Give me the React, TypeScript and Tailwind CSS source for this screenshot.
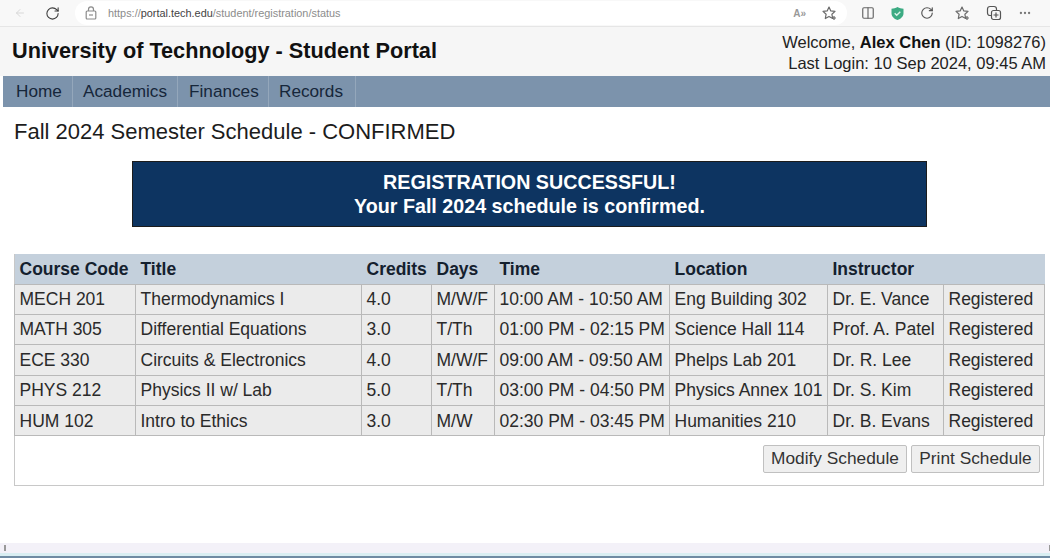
import { ArrowLeft, RotateCw, Columns2, Ellipsis } from 'lucide-react';

const COLS = [
  { label: 'Course Code', width: 'w-[121px]' },
  { label: 'Title', width: 'w-[226px]' },
  { label: 'Credits', width: 'w-[70px]' },
  { label: 'Days', width: 'w-[63px]' },
  { label: 'Time', width: 'w-[175px]' },
  { label: 'Location', width: 'w-[158px]' },
  { label: 'Instructor', width: 'w-[116px]' },
  { label: '', width: 'w-[101px]' },
];

const ROWS = [
  ['MECH 201', 'Thermodynamics I', '4.0', 'M/W/F', '10:00 AM - 10:50 AM', 'Eng Building 302', 'Dr. E. Vance', 'Registered'],
  ['MATH 305', 'Differential Equations', '3.0', 'T/Th', '01:00 PM - 02:15 PM', 'Science Hall 114', 'Prof. A. Patel', 'Registered'],
  ['ECE 330', 'Circuits & Electronics', '4.0', 'M/W/F', '09:00 AM - 09:50 AM', 'Phelps Lab 201', 'Dr. R. Lee', 'Registered'],
  ['PHYS 212', 'Physics II w/ Lab', '5.0', 'T/Th', '03:00 PM - 04:50 PM', 'Physics Annex 101', 'Dr. S. Kim', 'Registered'],
  ['HUM 102', 'Intro to Ethics', '3.0', 'M/W', '02:30 PM - 03:45 PM', 'Humanities 210', 'Dr. B. Evans', 'Registered'],
];

const NAV = [
  { label: 'Home', width: 'w-[70px] pl-[13px]' },
  { label: 'Academics', width: 'w-[105px] pl-[10px]' },
  { label: 'Finances', width: 'w-[91px] pl-[11px]' },
  { label: 'Records', width: 'w-[87px] pl-[10px]' },
];

function PadlockIcon() {
  return (
    <svg width="12" height="14" viewBox="0 0 12 14" fill="none" stroke="#8c8c8c" strokeWidth="1.2">
      <path d="M3.5 5V3.4a2.5 2.5 0 0 1 5 0V5" />
      <rect x="1.2" y="5" width="9.6" height="8" rx="1" />
      <path d="M4 9h4" />
    </svg>
  );
}

function StarPlusIcon() {
  return (
    <svg width="17" height="17" viewBox="0 0 17 17" fill="none" stroke="#6a6a6a" strokeWidth="1.2" strokeLinejoin="round">
      <path d="M8 2l1.8 3.9 4.2.5-3.1 2.9.8 4.2L8 11.4l-3.700 2.100.8-4.200L2 6.400l4.200-.5z" />
      <path d="M13 11v4M11 13h4" />
    </svg>
  );
}

function CollectionsIcon() {
  return (
    <svg width="16" height="16" viewBox="0 0 16 16" fill="none" stroke="#555" strokeWidth="1.2">
      <rect x="1.500" y="1.500" width="9" height="9" rx="2.500" />
      <rect x="5.500" y="5.500" width="9" height="9" rx="2" fill="#f7f7f7" />
      <path d="M10 7.500v5M7.500 10h5" />
    </svg>
  );
}

function ShieldIcon() {
  return (
    <svg width="15" height="15" viewBox="0 0 15 15">
      <path d="M7.500 1c2 1.200 3.800 1.600 6 1.700v4.500c0 3.200-2.500 5.500-6 6.800-3.500-1.300-6-3.600-6-6.800V2.700c2.200-.1 4-.5 6-1.700z" fill="#3cab83" />
      <path d="M4.700 7.300l2 2 3.600-3.600" fill="none" stroke="#d9f2e8" strokeWidth="1.400" />
    </svg>
  );
}

function BrowserBar() {
  return (
    <div className="h-[27px] bg-[#f8f8f8] border-b border-[#e6e6e6] flex items-center text-[#555]">
      <ArrowLeft size={12} className="ml-[14px] text-[#d8d8d8]" />
      <RotateCw size={15} strokeWidth={1.700} className="ml-[19px] text-[#3c3c3c]" />
      <div className="ml-[15px] w-[772px] h-[24px] bg-white rounded-full flex items-center pl-[10px]">
        <PadlockIcon />
        <span className="ml-[11px] text-[10.900px] text-[#8c8c8c]">
          https://<span className="text-[#444]">portal.tech.edu</span>/student/registration/status
        </span>
        <span className="ml-auto mr-[9px] flex items-center gap-[15px] text-[#999]">
          <span className="text-[10px] font-bold">A»</span>
          <StarPlusIcon />
        </span>
      </div>
      <div className="flex items-center ml-[14px] gap-[15px] text-[#666]">
        <Columns2 size={14} />
        <ShieldIcon />
        <RotateCw size={14} strokeWidth={2} className="text-[#555]" />
        <span className="ml-[5px]"><StarPlusIcon /></span>
        <CollectionsIcon />
        <Ellipsis size={14} className="ml-[1px] text-[#777]" />
      </div>
    </div>
  );
}

export default function App() {
  return (
    <div className="w-[1050px] h-[558px] overflow-hidden bg-white flex flex-col font-['Liberation_Sans',Arial,sans-serif] text-[#222]">
      <BrowserBar />
      <header className="h-[49px] bg-[#f6f6f6] flex items-center justify-between pl-[12px] pr-[4px]">
        <h1 className="text-[21.700px] font-bold text-[#111]">University of Technology - Student Portal</h1>
        <div className="text-right text-[16.500px] leading-[21px] text-[#222] mt-[2px]">
          <div>
            Welcome, <b className="text-[#111]">Alex Chen</b> (ID: 1098276)
          </div>
          <div>Last Login: 10 Sep 2024, 09:45 AM</div>
        </div>
      </header>
      <nav className="h-[31px] bg-[#7c93ac] flex ml-[3px]">
        {NAV.map((item) => (
          <a key={item.label} className={`${item.width} flex items-center border-r border-[#94a7bb] text-[17.200px] text-[#16263a]`}>
            {item.label}
          </a>
        ))}
      </nav>
      <main className="flex-1 flex flex-col">
        <h2 className="mt-[11px] ml-[14px] text-[22px] leading-[27px] text-[#1c1c1c]">Fall 2024 Semester Schedule - CONFIRMED</h2>
        <div className="mt-[16px] ml-[132px] w-[795px] h-[66px] bg-[#0d3461] border border-[#1c1c1c] flex flex-col items-center justify-center text-white font-bold text-[19.700px] leading-[24px]">
          <div>REGISTRATION SUCCESSFUL!</div>
          <div>Your Fall 2024 schedule is confirmed.</div>
        </div>
        <div className="mt-[27px] ml-[14px] w-[1030px] h-[232px] border border-[#c8c8c8] flex flex-col">
          <table className="-ml-px -mt-px w-[1030px] table-fixed border-collapse text-[17.500px]">
            <thead>
              <tr className="h-[30px] bg-[#c4d0dc]">
                {COLS.map((col) => (
                  <th key={col.label} className={`${col.width} pl-[5px] text-left font-bold text-[#14202e] whitespace-nowrap`}>
                    {col.label}
                  </th>
                ))}
              </tr>
            </thead>
            <tbody>
              {ROWS.map((row) => (
                <tr key={row[0]} className="h-[30.400px] bg-[#ebebeb]">
                  {row.map((cell, i) => (
                    <td key={i} className="pl-[4.500px] border border-[#b9b9b9] whitespace-nowrap text-[#2a2a2a]">
                      {cell}
                    </td>
                  ))}
                </tr>
              ))}
            </tbody>
          </table>
          <div className="flex justify-end gap-[4px] pt-[9px] pr-[3px]">
            <button className="h-[28px] w-[144px] bg-[#efefef] border border-[#c0c0c0] rounded-[2px] text-[17.300px] text-[#333]">Modify Schedule</button>
            <button className="h-[28px] w-[129px] bg-[#efefef] border border-[#c0c0c0] rounded-[2px] text-[17.300px] text-[#333]">Print Schedule</button>
          </div>
        </div>
      </main>
      <div className="h-[13px] bg-[#f3f1f8] border-b-[3px] border-[#d9eef2] flex justify-between items-center pl-[4px]">
        <span className="w-[2px] h-[6px] bg-[#999]" />
        <span className="w-[1px] h-[6px] bg-[#999]" />
      </div>
      <div className="h-[2px] bg-[#6f8ba3]" />
    </div>
  );
}
